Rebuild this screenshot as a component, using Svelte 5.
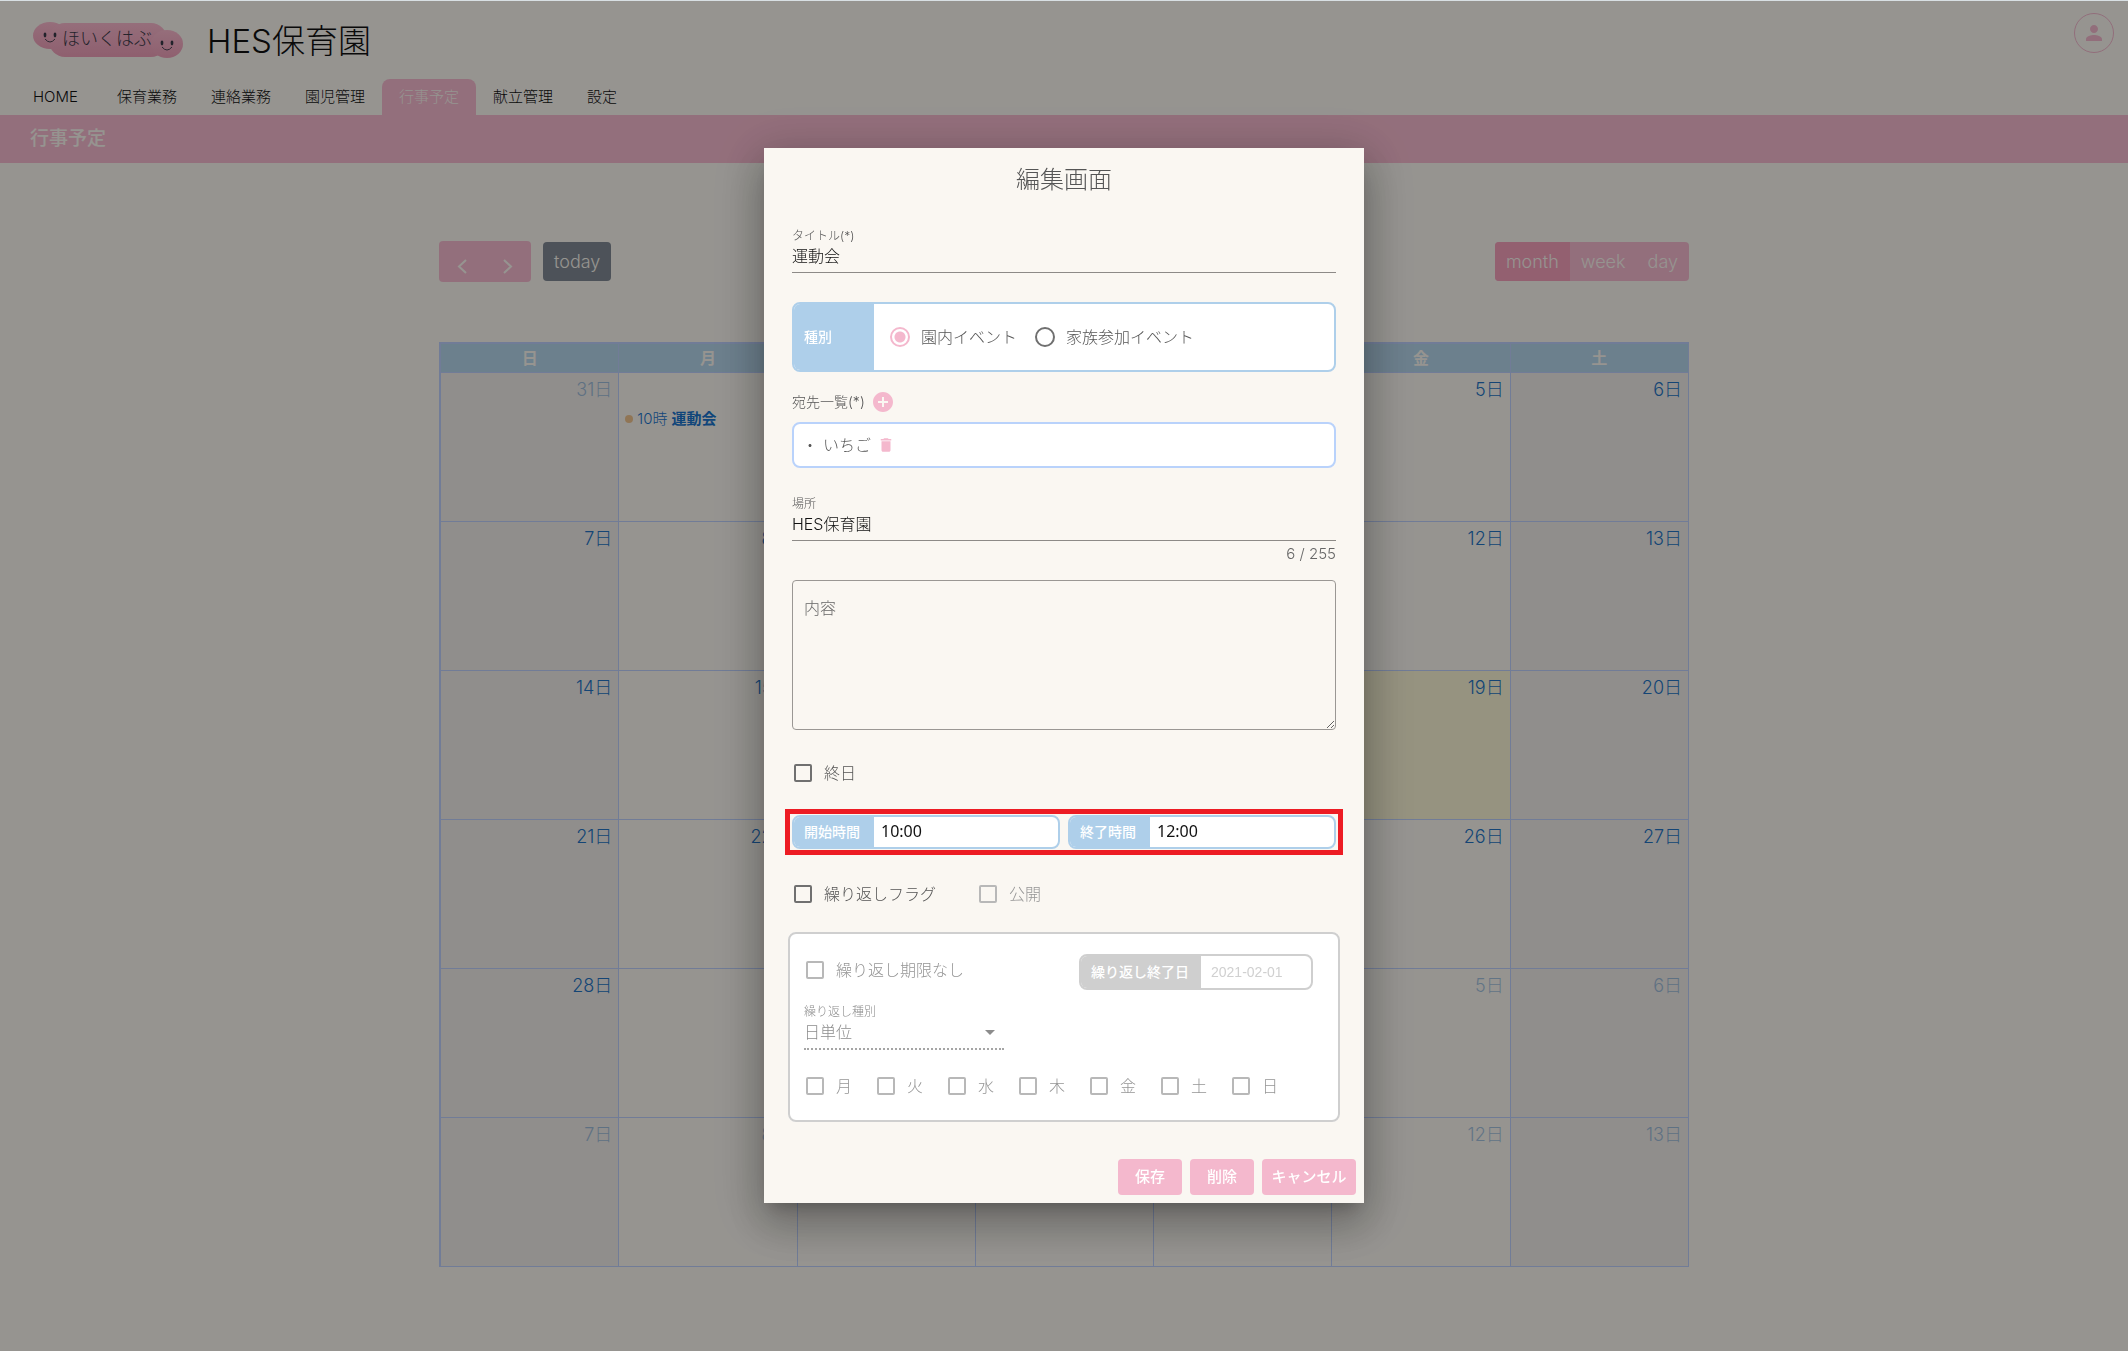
<script>
  const menu = ['HOME', '保育業務', '連絡業務', '園児管理', '行事予定', '献立管理', '設定'];
  const weekdays = ['日', '月', '火', '水', '木', '金', '土'];
  const repeatDays = ['月', '火', '水', '木', '金', '土', '日'];

  // 2021年2月: 1月31日(日)から6週間分
  const first = new Date(2021, 0, 31);
  const weeks = Array.from({ length: 6 }, (_, w) =>
    Array.from({ length: 7 }, (_, d) => {
      const date = new Date(first.getFullYear(), first.getMonth(), first.getDate() + w * 7 + d);
      return {
        day: date.getDate(),
        other: date.getMonth() !== 1,
        weekend: d === 0 || d === 6,
        today: date.getMonth() === 1 && date.getDate() === 19,
        event: date.getMonth() === 1 && date.getDate() === 1 ? { time: '10時', title: '運動会' } : null
      };
    })
  );

  let title = $state('運動会');
  let kind = $state('in');
  let place = $state('HES保育園');
  let content = $state('');
  let startTime = $state('10:00');
  let endTime = $state('12:00');
</script>

<div class="page">
  <header>
    <svg class="logo" viewBox="0 0 150 36" width="150" height="36" role="img" aria-label="ほいくはぶ">
      <defs>
        <linearGradient id="logo-pink" x1="0" y1="0" x2="0" y2="1">
          <stop offset="0" stop-color="#f9b8cd" />
          <stop offset="1" stop-color="#ee9fb9" />
        </linearGradient>
      </defs>
      <g fill="url(#logo-pink)">
        <ellipse cx="17" cy="13.5" rx="17" ry="13.5" />
        <rect x="16" y="1" width="118" height="34" rx="16" />
        <ellipse cx="134" cy="22" rx="16" ry="14" />
      </g>
      <g fill="#3a3a48">
        <ellipse cx="12" cy="13" rx="1.4" ry="2.4" />
        <ellipse cx="22" cy="13" rx="1.4" ry="2.4" />
        <ellipse cx="129" cy="21" rx="1.4" ry="2.4" />
        <ellipse cx="139" cy="21" rx="1.4" ry="2.4" />
        <text x="29" y="23" font-size="18">ほいくはぶ</text>
      </g>
      <g fill="none" stroke="#3a3a48" stroke-width="0.9">
        <path d="M12 17q5 6 10 0" />
        <path d="M129 25q5 6 10 0" />
      </g>
    </svg>
    <h1>HES保育園</h1>
    <button class="user" aria-label="ユーザー">
      <svg viewBox="0 0 24 24" width="24" height="24" fill="currentColor">
        <path d="M12 12c2.210 0 4-1.790 4-4s-1.790-4-4-4-4 1.790-4 4 1.790 4 4 4zm0 2c-2.670 0-8 1.340-8 4v2h16v-2c0-2.660-5.330-4-8-4z" />
      </svg>
    </button>
  </header>

  <nav>
    {#each menu as item}
      <a href="#top" class:active={item === '行事予定'}>{item}</a>
    {/each}
  </nav>
  <div class="page-title">行事予定</div>

  <main>
    <div class="toolbar">
      <div class="group arrows">
        <button aria-label="前の月">
          <svg viewBox="0 0 16 20" width="16" height="20"><path d="M12 4 5 10.500l7 6.500" /></svg>
        </button>
        <button aria-label="次の月">
          <svg viewBox="0 0 16 20" width="16" height="20"><path d="M4 4l7 6.500L4 17" /></svg>
        </button>
      </div>
      <button class="today-btn">today</button>
      <div class="group views">
        <button class="on">month</button>
        <button>week</button>
        <button>day</button>
      </div>
    </div>

    <div class="calendar">
      <table>
        <thead>
          <tr>
            {#each weekdays as name}
              <th>{name}</th>
            {/each}
          </tr>
        </thead>
        <tbody>
          {#each weeks as week}
            <tr>
              {#each week as cell}
                <td class:weekend={cell.weekend} class:today={cell.today}>
                  <div class="day" class:other={cell.other}>{cell.day}日</div>
                  {#if cell.event}
                    <div class="event">
                      <span class="dot"></span>
                      <span>{cell.event.time}</span>
                      <b>{cell.event.title}</b>
                    </div>
                  {/if}
                </td>
              {/each}
            </tr>
          {/each}
        </tbody>
      </table>
    </div>
  </main>
</div>

<div class="overlay">
  <form class="dialog" onsubmit={(e) => e.preventDefault()}>
    <h2>編集画面</h2>
    <div class="body">
      <div class="field first">
        <label for="title">タイトル(*)</label>
        <input id="title" type="text" bind:value={title} />
      </div>

      <div class="boxed kind" role="radiogroup" aria-label="種別">
        <span class="tag">種別</span>
        <div class="choices">
          <label><input type="radio" name="kind" value="in" bind:group={kind} />園内イベント</label>
          <label><input type="radio" name="kind" value="family" bind:group={kind} />家族参加イベント</label>
        </div>
      </div>

      <div class="targets-head">
        <span>宛先一覧(*)</span>
        <button type="button" aria-label="宛先を追加">
          <svg viewBox="0 0 24 24" width="24" height="24" fill="currentColor">
            <path d="M12 2C6.480 2 2 6.480 2 12s4.480 10 10 10 10-4.480 10-10S17.520 2 12 2zm5 11h-4v4h-2v-4H7v-2h4V7h2v4h4v2z" />
          </svg>
        </button>
      </div>
      <div class="targets">
        <span class="bullet">・</span>
        <span>いちご</span>
        <button type="button" aria-label="いちごを削除">
          <svg viewBox="0 0 24 24" width="18" height="18" fill="currentColor">
            <path d="M6 19c0 1.100.9 2 2 2h8c1.100 0 2-.9 2-2V7H6v12zM19 4h-3.500l-1-1h-5l-1 1H5v2h14V4z" />
          </svg>
        </button>
      </div>

      <div class="field place">
        <label for="place">場所</label>
        <input id="place" type="text" maxlength="255" bind:value={place} />
        <div class="counter">{place.length} / 255</div>
      </div>

      <textarea aria-label="内容" placeholder="内容" bind:value={content}></textarea>

      <div class="checks allday">
        <label><input type="checkbox" />終日</label>
      </div>

      <div class="times">
        <div class="boxed">
          <label class="tag" for="start">開始時間</label>
          <input id="start" type="text" bind:value={startTime} />
        </div>
        <div class="boxed">
          <label class="tag" for="end">終了時間</label>
          <input id="end" type="text" bind:value={endTime} />
        </div>
        <div class="marker"></div>
      </div>

      <div class="checks flags">
        <label><input type="checkbox" />繰り返しフラグ</label>
        <label class="off"><input type="checkbox" disabled />公開</label>
      </div>

      <fieldset class="repeat" disabled>
        <div class="limit">
          <div class="checks">
            <label class="off"><input type="checkbox" />繰り返し期限なし</label>
          </div>
          <div class="boxed until">
            <label class="tag" for="until">繰り返し終了日</label>
            <input id="until" type="text" size="8" value="2021-02-01" />
          </div>
        </div>
        <div class="field unit">
          <label for="unit">繰り返し種別</label>
          <div class="select">
            <select id="unit"><option>日単位</option></select>
            <svg viewBox="0 0 10 5" width="10" height="5"><path d="M0 0h10L5 5z" fill="#8c8c8c" /></svg>
          </div>
        </div>
        <div class="checks days">
          {#each repeatDays as day}
            <label class="off"><input type="checkbox" />{day}</label>
          {/each}
        </div>
      </fieldset>
    </div>

    <div class="actions">
      <button>保存</button>
      <button type="button">削除</button>
      <button type="button" class="cancel">キャンセル</button>
    </div>
  </form>
</div>

<style>
  :global(body) {
    background: #faf7f1;
    font-family: Inter, 'Noto Sans CJK JP', sans-serif;
    font-weight: 300;
    color: #111;
  }

  * { box-sizing: border-box; }

  button, input, textarea, select {
    font: inherit;
    color: inherit;
    margin: 0;
  }

  button {
    border: none;
    background: none;
    padding: 0;
    cursor: pointer;
  }

  .page { min-height: 100vh; }

  header {
    display: flex;
    align-items: center;
    height: 79px;
    padding: 0 14px 0 33px;
  }

  h1 {
    margin: 2px 0 0 24px;
    font-size: 33px;
    line-height: 40px;
    font-weight: 300;
  }

  .user {
    display: flex;
    align-items: center;
    justify-content: center;
    align-self: flex-start;
    width: 40px;
    height: 40px;
    margin: 13px 0 0 auto;
    border: 1px solid #f4b8cd;
    border-radius: 50%;
    color: #f4b8cd;
  }

  nav { display: flex; padding-left: 16px; }

  nav a {
    min-width: 84px;
    padding: 0 17px;
    font-size: 15px;
    line-height: 36px;
    color: inherit;
    text-decoration: none;
  }

  nav a.active {
    background: #f6bacf;
    color: #faf7f1;
    border-radius: 8px 8px 0 0;
  }

  .page-title {
    padding-left: 30px;
    background: #f6bacf;
    color: #faf7f1;
    font-size: 19px;
    font-weight: 500;
    line-height: 48px;
  }

  main {
    max-width: 1250px;
    margin: 0 auto;
    padding-top: 78px;
  }

  .toolbar {
    display: flex;
    align-items: center;
    gap: 12px;
    height: 41px;
    color: #faf7f1;
    font-size: 18px;
  }

  .toolbar button { height: 39px; padding: 0 11px; }

  .group {
    display: flex;
    background: #f6bacf;
    border-radius: 4px;
    overflow: hidden;
  }

  .toolbar .arrows button { width: 46px; height: 41px; padding: 12px 0 0; }
  .arrows path { fill: none; stroke: #faf7f1; stroke-width: 2; }
  .toolbar .today-btn { background: #808994; border-radius: 4px; }
  .views { margin-left: auto; }
  .views .on { background: #f5a0bb; }

  .calendar {
    margin-top: 60px;
    border: solid #bccffc;
    border-width: 1px 0 0 1px;
  }

  table {
    width: 100%;
    table-layout: fixed;
    border-collapse: collapse;
  }

  th, td { border: 1px solid #bccffc; padding: 0; }

  th {
    height: 29px;
    background: #b5d5eb;
    color: #faf7f1;
    font-size: 16px;
    line-height: 24px;
    font-weight: 700;
  }

  td { height: 149px; vertical-align: top; }
  .weekend { background: #f0edea; }
  .today { background: #faf5d6; }

  .day {
    padding: 4px 6px 0 0;
    text-align: right;
    font-size: 18px;
    line-height: 26px;
    color: #2374c4;
  }

  .other { opacity: 0.4; }

  .event {
    display: flex;
    align-items: center;
    gap: 4px;
    padding: 4px 6px;
    font-size: 15px;
    line-height: 24px;
    color: #1a74cc;
  }

  .event b { font-weight: 700; }

  .dot {
    width: 8px;
    height: 8px;
    border-radius: 50%;
    background: #f0c48e;
  }

  .overlay {
    position: fixed;
    inset: 0;
    display: flex;
    align-items: center;
    justify-content: center;
    background: rgba(0, 0, 0, 0.4);
    box-shadow: inset 0 1px #d8dfe3;
  }

  .dialog {
    width: 600px;
    background: #faf7f2;
    color: #555;
    font-size: 16px;
    box-shadow:
      0 11px 15px -7px rgba(0, 0, 0, 0.2),
      0 24px 38px 3px rgba(0, 0, 0, 0.14),
      0 9px 46px 8px rgba(0, 0, 0, 0.2);
  }

  h2 {
    margin: 0;
    padding-top: 16px;
    text-align: center;
    font-size: 24px;
    line-height: 32px;
    font-weight: 300;
  }

  .body { padding: 0 28px; }

  .field label {
    display: block;
    font-size: 12px;
    line-height: 16px;
  }

  .field input {
    display: block;
    width: 100%;
    height: 29px;
    padding: 0 0 6px;
    border: none;
    border-bottom: 1px solid #8d8a87;
    background: none;
    color: #111;
  }

  .first { margin-top: 32px; }
  .place { margin-top: 28px; }

  .counter {
    text-align: right;
    font-size: 15px;
    line-height: 25px;
    color: #666;
  }

  .boxed {
    display: flex;
    border: 2px solid #aecfea;
    border-radius: 8px;
    background: #fff;
    overflow: hidden;
  }

  .tag {
    display: flex;
    align-items: center;
    flex: none;
    width: 80px;
    padding-left: 10px;
    background: #aecfea;
    color: #fff;
    font-size: 14px;
    line-height: 20px;
    font-weight: 500;
  }

  .kind { height: 70px; margin-top: 29px; }

  .choices {
    display: flex;
    align-items: center;
    gap: 18px;
    padding-left: 16px;
  }

  .choices label {
    display: flex;
    align-items: center;
    gap: 11px;
    line-height: 24px;
  }

  input[type='radio'] {
    appearance: none;
    width: 20px;
    height: 20px;
    border: 2px solid #707070;
    border-radius: 50%;
  }

  input[type='radio']:checked {
    border-color: #f4b8cd;
    background: radial-gradient(circle, #f4b8cd 5px, transparent 6px);
  }

  .targets-head {
    display: flex;
    align-items: center;
    gap: 6px;
    height: 20px;
    margin-top: 20px;
    font-size: 14px;
    line-height: 20px;
  }

  .targets-head button, .targets button { display: flex; color: #f4b8cd; }

  .targets {
    display: flex;
    align-items: center;
    height: 46px;
    margin-top: 10px;
    padding-left: 8px;
    border: 2px solid #b9d2fb;
    border-radius: 8px;
    background: #fff;
    line-height: 24px;
  }

  .bullet { width: 21px; }
  .targets button { margin-left: 6px; }

  textarea {
    display: block;
    width: 100%;
    height: 150px;
    margin-top: 14px;
    padding: 15px 11px;
    border: 1px solid #9a9794;
    border-radius: 4px;
    background: none;
    line-height: 24px;
    resize: vertical;
  }

  textarea::placeholder { color: #666; }

  .checks { display: flex; }

  .checks label {
    display: flex;
    align-items: center;
    gap: 12px;
    padding-left: 2px;
    line-height: 24px;
  }

  input[type='checkbox'] {
    appearance: none;
    width: 18px;
    height: 18px;
    border: 2px solid #707070;
    border-radius: 2px;
  }

  .off { color: #959595; }
  .off input[type='checkbox'] { border-color: #b8b8b8; }

  .allday { margin-top: 31px; }

  .times {
    position: relative;
    display: grid;
    grid-template-columns: 1fr 1fr;
    gap: 8px;
    margin-top: 30px;
  }

  .times .boxed { height: 34px; }

  .times input {
    flex: 1;
    min-width: 0;
    padding: 0 7px 2px;
    border: none;
    background: none;
    color: #111;
    font-family: 'Noto Sans', sans-serif;
    font-size: 16px;
    font-weight: 400;
  }

  .marker {
    position: absolute;
    inset: -6px -7px;
    border: 5px solid #ed1c24;
    pointer-events: none;
  }

  .flags { gap: 41px; margin-top: 33px; }

  .repeat {
    min-width: 0;
    margin: 26px -4px 0;
    padding: 20px 25px 22px 14px;
    border: 2px solid #cfcfcf;
    border-radius: 8px;
    background: #fff;
  }

  .limit {
    display: flex;
    align-items: flex-start;
    justify-content: space-between;
  }

  .limit .checks { padding-top: 4px; }

  .until { width: 234px; height: 36px; border-color: #cfcfcf; }
  .until .tag { width: 120px; background: #cfcfcf; }

  .until input {
    flex: 1;
    min-width: 0;
    padding: 0 10px;
    border: none;
    background: none;
    color: #d0d0d0;
    font-family: 'Liberation Sans', sans-serif;
    font-size: 14px;
  }

  .unit { width: 200px; margin-top: 14px; color: #8c8c8c; }

  .select {
    display: flex;
    align-items: center;
    height: 30px;
    padding: 0 9px 4px 0;
    border-bottom: 2px dotted #a5a5a5;
  }

  select {
    appearance: none;
    flex: 1;
    padding: 0;
    border: none;
    background: none;
    color: #8c8c8c;
    opacity: 1;
  }

  .days { gap: 23px; margin-top: 24px; }

  .actions {
    display: flex;
    justify-content: flex-end;
    gap: 8px;
    padding: 37px 8px 8px;
  }

  .actions button {
    width: 64px;
    height: 36px;
    border-radius: 4px;
    background: #f4b8cd;
    color: #fff;
    font-size: 15px;
    line-height: 20px;
    font-weight: 500;
  }

  .actions .cancel { width: 94px; }
</style>
